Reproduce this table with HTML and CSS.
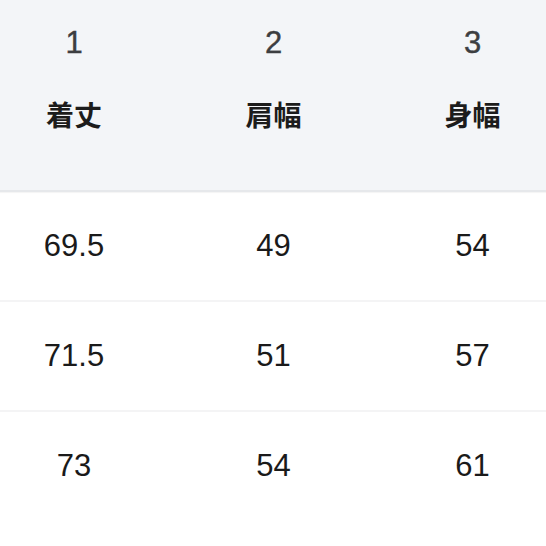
FILE: index.html
```html
<!DOCTYPE html>
<html lang="ja">
<head>
<meta charset="utf-8">
<link rel="stylesheet" href="styles.css">
</head>
<body>
<div class="table">
  <div class="head">
    <div class="hcell"><span class="num">1</span><span class="label">着丈</span></div>
    <div class="hcell"><span class="num">2</span><span class="label">肩幅</span></div>
    <div class="hcell"><span class="num">3</span><span class="label">身幅</span></div>
  </div>
  <div class="row">
    <div class="cell">69.5</div>
    <div class="cell">49</div>
    <div class="cell">54</div>
  </div>
  <div class="row">
    <div class="cell">71.5</div>
    <div class="cell">51</div>
    <div class="cell">57</div>
  </div>
  <div class="row last">
    <div class="cell">73</div>
    <div class="cell">54</div>
    <div class="cell">61</div>
  </div>
</div>
</body>
</html>
```
FILE: styles.css
```css
html, body {
  margin: 0;
  padding: 0;
  background: #ffffff;
}
body {
  width: 546px;
  height: 546px;
  overflow: hidden;
  font-family: "Liberation Sans", "Noto Sans CJK JP", sans-serif;
  color: #1a1a1a;
}
.table {
  display: flex;
  flex-direction: column;
}
.head, .row {
  display: grid;
  grid-template-columns: 148px 251px 147px;
}
.head {
  height: 190px;
  background: #f3f5f8;
  border-bottom: 2px solid #e6e8eb;
  box-shadow: 0 1px 1px rgba(0,0,0,0.04);
}
.hcell {
  display: flex;
  flex-direction: column;
  align-items: center;
  padding-top: 28px;
}
.num {
  font-size: 31px;
  line-height: 30px;
  height: 30px;
  color: #3c3e41;
  -webkit-text-stroke: 0.4px #3c3e41;
}
.label {
  margin-top: 41px;
  font-family: "Noto Sans CJK JP", sans-serif;
  font-size: 28px;
  line-height: 30px;
  font-weight: 700;
  color: #1c1c1c;
}
.row {
  height: 108px;
  border-bottom: 2px solid #f4f4f5;
}
.row.last {
  border-bottom: none;
}
.cell {
  display: flex;
  align-items: center;
  justify-content: center;
  font-size: 31px;
  font-weight: 400;
  color: #1a1a1a;
}
```
